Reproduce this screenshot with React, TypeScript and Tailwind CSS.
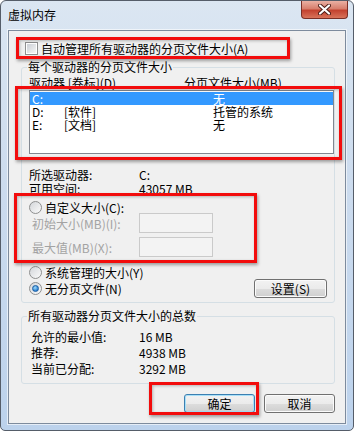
import React from "react";

const font = "[font-family:'Noto_Sans_CJK_SC','Noto_Sans_CJK_JP',sans-serif]";
const btn =
  "flex items-center justify-center rounded-[3px] border bg-[linear-gradient(#f2f2f2_0%,#ebebeb_50%,#dddddd_50%,#cfcfcf_100%)] text-[12px] leading-[13px] text-black";

function CheckBox() {
  return (
    <div className="w-[13px] h-[13px] border border-[#8e8f8f] bg-white p-[1px] shrink-0">
      <div className="w-full h-full bg-[linear-gradient(135deg,#cbcfd5,#f6f6f6)]" />
    </div>
  );
}

function Radio({ checked }: { checked?: boolean }) {
  return (
    <div className="w-[13px] h-[13px] rounded-full border border-[#8e8f8f] bg-[linear-gradient(135deg,#d3d6da,#fbfbfb)] flex items-center justify-center shrink-0">
      {checked && (
        <div className="w-[7px] h-[7px] rounded-full border border-[#1a5ea3] bg-[radial-gradient(circle_at_40%_35%,#9fdcfb,#2b7fd0_70%)]" />
      )}
    </div>
  );
}

function Red({ cls }: { cls: string }) {
  return (
    <div
      className={
        "absolute border-[3px] border-[#f20c0c] shadow-[1px_2px_3px_rgba(0,0,0,0.35),inset_1px_1px_3px_rgba(0,0,0,0.25)] " +
        cls
      }
    />
  );
}

export default function App() {
  const drives = [
    { d: "C:", label: "", size: "无", sel: true },
    { d: "D:", label: "[软件]", size: "托管的系统", sel: false },
    { d: "E:", label: "[文档]", size: "无", sel: false },
  ];

  return (
    <div className={"relative w-[354px] h-[431px] bg-white text-[12px] text-black " + font}>
      <div className="w-full h-full flex flex-col rounded-t-[6px] rounded-b-[5px] border border-[#555d69] bg-[linear-gradient(180deg,#dbe6f2_0%,#cddcee_40%,#bcd2ec_100%)]">
        {/* title bar */}
        <div className="h-[29px] flex justify-between shrink-0">
          <div className="pl-[7px] pt-[7px] leading-[13px] text-[12px] text-black">虚拟内存</div>
          <div className="mr-[5px] w-[47px] h-[18px] rounded-b-[4px] border border-t-0 border-[#7a2f26] bg-[linear-gradient(#eab0a3_0%,#d77f6d_45%,#c3422f_55%,#d8735a_100%)] flex items-center justify-center">
            <svg width="13" height="11" viewBox="0 0 13 11">
              <path d="M2 1.5 L11 9.5 M11 1.5 L2 9.5" stroke="#4a1a14" strokeWidth="4" strokeLinecap="round" />
              <path d="M2 1.5 L11 9.5 M11 1.5 L2 9.5" stroke="#ffffff" strokeWidth="2.2" strokeLinecap="round" />
            </svg>
          </div>
        </div>

        {/* client area */}
        <div className="mx-[7px] mb-[6px] flex-1 flex flex-col border border-[#7d8b9d] bg-[#f0f0f0] shadow-[0_0_0_1px_rgba(255,255,255,0.6)] leading-[13px]">
          <div className="mt-[11px] ml-[16px] h-[13px] flex items-center gap-[3px]">
            <CheckBox />
            <span>自动管理所有驱动器的分页文件大小(A)</span>
          </div>

          {/* group 1 */}
          <div className="mt-[12px] ml-[12px] w-[314px] h-[236px] border border-[#d5dfe5] rounded-[3px] flex flex-col">
            <div className="-mt-[8px] ml-[5px] px-[1px] bg-[#f0f0f0] self-start h-[13px]">每个驱动器的分页文件大小</div>
            <div className="mt-[3px] ml-[7px] h-[13px] flex">
              <span className="w-[155px]">驱动器 [卷标](D)</span>
              <span>分页文件大小(MB)</span>
            </div>
            <div className="mt-[1px] ml-[7px] w-[305px] h-[64px] border border-[#828790] bg-white pt-[1px]">
              {drives.map((r) => (
                <div
                  key={r.d}
                  className={
                    "h-[13px] flex items-center pl-[2px] " + (r.sel ? "bg-[#3399ff] text-white" : "text-black")
                  }
                >
                  <span className="w-[32px]">{r.d}</span>
                  <span className="w-[149px]">{r.label}</span>
                  <span>{r.size}</span>
                </div>
              ))}
            </div>

            <div className="mt-[13px] ml-[7px] h-[14px] flex items-center">
              <span className="w-[110px]">所选驱动器:</span>
              <span>C:</span>
            </div>
            <div className="ml-[7px] h-[14px] flex items-center">
              <span className="w-[110px]">可用空间:</span>
              <span>43057 MB</span>
            </div>

            <div className="mt-[7px] ml-[7px] h-[11px] flex items-center gap-[3px]">
              <Radio />
              <span>自定义大小(C):</span>
            </div>
            <div className="ml-[10px] h-[20px] flex items-center text-[#a3a3a3]">
              <span className="w-[107px]">初始大小(MB)(I):</span>
              <div className="w-[74px] h-[20px] border border-[#cacaca] bg-[#f3f3f3]" />
            </div>
            <div className="mt-[4px] ml-[10px] h-[20px] flex items-center text-[#a3a3a3]">
              <span className="w-[107px]">最大值(MB)(X):</span>
              <div className="w-[74px] h-[20px] border border-[#cacaca] bg-[#f3f3f3]" />
            </div>

            <div className="mt-[9px] ml-[7px] h-[13px] flex items-center gap-[3px]">
              <Radio />
              <span>系统管理的大小(Y)</span>
            </div>
            <div className="mx-[7px] h-[19px] flex items-center justify-between">
              <div className="flex items-center gap-[3px]">
                <Radio checked />
                <span>无分页文件(N)</span>
              </div>
              <div className={btn + " w-[73px] h-[19px] border-[#707070] shadow-[inset_0_0_0_1px_#fbfbfb]"}>设置(S)</div>
            </div>
          </div>

          {/* group 2 */}
          <div className="mt-[13px] ml-[12px] w-[314px] h-[68px] border border-[#d5dfe5] rounded-[3px] flex flex-col">
            <div className="-mt-[8px] ml-[5px] px-[1px] bg-[#f0f0f0] self-start h-[13px]">所有驱动器分页文件大小的总数</div>
            <div className="mt-[6px] ml-[9px] h-[16px] flex items-center">
              <span className="w-[108px]">允许的最小值:</span>
              <span>16 MB</span>
            </div>
            <div className="ml-[9px] h-[16px] flex items-center">
              <span className="w-[108px]">推荐:</span>
              <span>4938 MB</span>
            </div>
            <div className="ml-[9px] h-[16px] flex items-center">
              <span className="w-[108px]">当前已分配:</span>
              <span>3292 MB</span>
            </div>
          </div>

          <div className="mt-[10px] mr-[10px] flex justify-end gap-[9px]">
            <div className={btn + " w-[71px] h-[19px] border-[#3c7fb1] shadow-[inset_0_0_0_1px_#a8e0f8]"}>确定</div>
            <div className={btn + " w-[71px] h-[19px] border-[#707070] shadow-[inset_0_0_0_1px_#fbfbfb]"}>取消</div>
          </div>
        </div>
      </div>

      {/* annotation boxes */}
      <Red cls="left-[16px] top-[37px] w-[274px] h-[22px]" />
      <Red cls="left-[15px] top-[86px] w-[327px] h-[74px]" />
      <Red cls="left-[14px] top-[193px] w-[243px] h-[70px]" />
      <Red cls="left-[149px] top-[382px] w-[110px] h-[33px]" />
    </div>
  );
}
